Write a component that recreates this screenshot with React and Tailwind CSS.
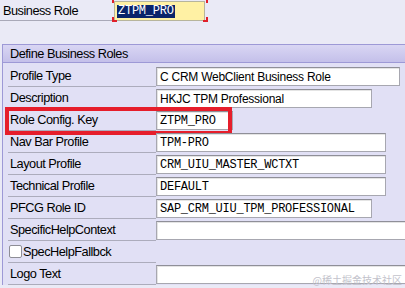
import React from 'react';

const rows = [
  { label: 'Profile Type', value: 'C CRM WebClient Business Role', w: 'w-[244px]', mono: false },
  { label: 'Description', value: 'HKJC TPM Professional', w: 'w-[216px]', mono: false },
  { label: 'Role Config. Key', value: 'ZTPM_PRO', w: 'w-[77px]', mono: true, marked: true },
  { label: 'Nav Bar Profile', value: 'TPM-PRO', w: 'w-[230px]', mono: true },
  { label: 'Layout Profile', value: 'CRM_UIU_MASTER_WCTXT', w: 'w-[230px]', mono: true },
  { label: 'Technical Profile', value: 'DEFAULT', w: 'w-[230px]', mono: true },
  { label: 'PFCG Role ID', value: 'SAP_CRM_UIU_TPM_PROFESSIONAL', w: 'w-[216px]', mono: true },
  { label: 'SpecificHelpContext', value: '', w: 'w-[260px]', mono: true },
  { label: 'SpecHelpFallbck', checkbox: true },
  { label: 'Logo Text', value: '', w: 'w-[260px]', mono: true },
];

function Field({ row }) {
  return (
    <div className={`${row.w} h-[19px] shrink-0 bg-white border border-[#a7a7b0] border-t-[#8f8f98] shadow-[inset_1px_1px_0_#e4e4e4] flex items-center pl-[3px] overflow-hidden whitespace-nowrap`}>
      {row.mono ? (
        <span className="font-['Liberation_Mono'] text-[12px] tracking-[-0.25px] text-black">{row.value}</span>
      ) : (
        <span className="text-[12px] tracking-[-0.25px] text-black">{row.value}</span>
      )}
    </div>
  );
}

export default function App() {
  return (
    <div className="relative w-[405px] h-[288px] overflow-hidden bg-[#eaeaf6] font-['Liberation_Sans',sans-serif] text-[12px] text-black">
      {/* Top selection row */}
      <div className="flex h-[22px]">
        <div className="w-[112px] h-[21px] border-b border-[#a9a9b8] pl-[3px] pt-[4px] tracking-[-0.5px] text-[12.75px] leading-[14px]">
          Business Role
        </div>
        <div className="relative w-[96px] h-[22px]">
          <div className="absolute left-[2px] top-[1px] w-[91px] h-[20px] bg-[#fff1a4] border border-[#b7b59c] flex items-center pl-[2px]">
            <span className="bg-[#0a246a] text-white font-['Liberation_Mono'] text-[12px] tracking-[-0.25px] leading-[13px] px-[1px]">ZTPM_PRO</span>
          </div>
          {/* red corner marks */}
          <span className="absolute left-0 top-0 w-[2px] h-[3px] bg-[#e0202a]" />
          <span className="absolute left-0 bottom-0 w-[2px] h-[5px] bg-[#e0202a]" />
          <span className="absolute left-0 bottom-0 w-[5px] h-[2px] bg-[#e0202a]" />
          <span className="absolute right-0 top-0 w-[2px] h-[3px] bg-[#e0202a]" />
          <span className="absolute right-0 bottom-0 w-[2px] h-[5px] bg-[#e0202a]" />
          <span className="absolute right-0 bottom-0 w-[5px] h-[2px] bg-[#e0202a]" />
        </div>
      </div>

      {/* Define Business Roles panel */}
      <div className="mt-[22px] ml-[2px] border-l border-t border-[#9d99d6] bg-[#e1e0f5]">
        <div className="h-[18px] border-b border-[#9d99d6] bg-gradient-to-b from-[#d9d6f3] to-[#c4c0ea] flex items-center pl-[7px] text-[12.75px] tracking-[-0.5px]">
          Define Business Roles
        </div>
        <div className="pt-[2px]">
          {rows.map((row) => (
            <div key={row.label} className="relative flex h-[22px]">
              <div className="ml-[5px] w-[148px] h-[22px] shrink-0 border-b border-[#acacbc] flex items-center tracking-[-0.5px] text-[12.75px]">
                {row.checkbox ? (
                  <>
                    <span className="w-[13px] h-[13px] bg-white border border-[#8e8e96] rounded-[2px] mr-[1px] ml-[1px]" />
                    <span>{row.label}</span>
                  </>
                ) : (
                  <span className="pl-[2px]">{row.label}</span>
                )}
              </div>
              {!row.checkbox && (
                <div className="pt-[2px]">
                  <Field row={row} />
                </div>
              )}
              {row.marked && (
                <div className="absolute left-[2px] top-[-2px] w-[227px] h-[28px] border-[4px] border-[#e61e2b]" />
              )}
            </div>
          ))}
        </div>
      </div>

      <div className="absolute right-[3px] bottom-[2px] text-[10px] leading-[12px] text-[#c3c3cc] font-['Noto_Sans_CJK_SC',sans-serif]">
        @稀土掘金技术社区
      </div>
    </div>
  );
}
